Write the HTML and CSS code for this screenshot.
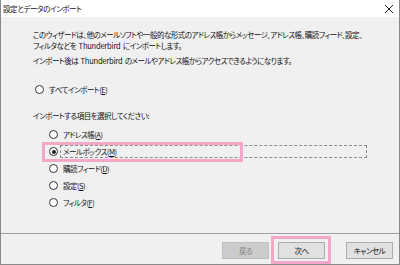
FILE: index.html
```html
<!DOCTYPE html>
<html lang="ja">
<head>
<meta charset="utf-8">
<title>設定とデータのインポート</title>
<link rel="stylesheet" href="styles.css">
</head>
<body>
<div class="window">
  <div class="titlebar">
    <span class="title">設定とデータのインポート</span>
    <svg class="close" width="10" height="10" viewBox="0 0 10 10"><path d="M1 1L9 9M9 1L1 9" stroke="#222" stroke-width="1" fill="none"/></svg>
  </div>
  <div class="content">
    <p class="intro">このウィザードは、他のメールソフトや一般的な形式のアドレス帳からメッセージ、アドレス帳、購読フィード、設定、<br>フィルタなどを <span class="latin">Thunderbird</span> にインポートします。</p>
    <p class="note">インポート後は <span class="latin">Thunderbird</span> のメールやアドレス帳からアクセスできるようになります。</p>
    <div class="radio all"><span class="circle"></span><span class="lbl">すべてインポート(<u>E</u>)</span></div>
    <p class="prompt">インポートする項目を選択してください:</p>
    <div class="group">
      <div class="radio"><span class="circle"></span><span class="lbl">アドレス帳(<u>A</u>)</span></div>
      <div class="radio"><span class="circle checked"></span><span class="lbl focus">メールボックス(<u>M</u>)</span></div>
      <div class="radio"><span class="circle"></span><span class="lbl">購読フィード(<u>D</u>)</span></div>
      <div class="radio"><span class="circle"></span><span class="lbl">設定(<u>S</u>)</span></div>
      <div class="radio"><span class="circle"></span><span class="lbl">フィルタ(<u>F</u>)</span></div>
    </div>
  </div>
  <div class="footer">
    <button class="btn disabled">戻る</button>
    <button class="btn next">次へ</button>
    <button class="btn cancel">キャンセル</button>
  </div>
  <div class="mark mark-mailbox"></div>
  <div class="mark mark-next"></div>
</div>
</body>
</html>
```
FILE: styles.css
```css
* { box-sizing: border-box; }
html, body { margin: 0; padding: 0; }
body {
  width: 400px;
  height: 265px;
  background: #f0f0f0;
  font-family: "Noto Sans CJK JP", "Noto Sans", sans-serif;
  font-size: 7.5px;
  letter-spacing: -0.5px;
  word-spacing: 1.2px;
  font-feature-settings: "palt";
  color: #111;
  overflow: hidden;
}
.latin { letter-spacing: -0.2px; }
.window {
  position: relative;
  width: 400px;
  height: 265px;
  border: 1px solid #8a8a8a;
  border-top: none;
  display: flex;
  flex-direction: column;
  background: #f0f0f0;
}
.titlebar {
  height: 17px;
  background: #fff;
  display: flex;
  align-items: center;
  justify-content: space-between;
  padding: 0 5px 0 2px;
  flex: none;
}
.title { font-size: 7.6px; line-height: 17px; white-space: nowrap; }
.close { display: block; margin-top: 1px; }
.content {
  height: 216px;
  flex: none;
  padding: 12px 0 0 32px;
  line-height: 11px;
}
.content p { margin: 0; white-space: nowrap; }
.note { margin-top: 4px !important; }
.radio {
  display: flex;
  align-items: center;
  height: 11px;
  white-space: nowrap;
}
.radio.all { margin-top: 18px; padding-left: 2px; }
.prompt { margin-top: 15px !important; }
.group { margin-top: 5px; padding-left: 16px; }
.group .radio { height: 17px; }
.circle {
  width: 9px;
  height: 9px;
  border: 1px solid #333;
  border-radius: 50%;
  background: #fff;
  margin-right: 5px;
  flex: none;
  position: relative;
}
.circle.checked::after {
  content: "";
  position: absolute;
  left: 1.5px;
  top: 1.5px;
  width: 4px;
  height: 4px;
  border-radius: 50%;
  background: #222;
}
.lbl u { text-decoration: underline; text-underline-offset: 1px; }
.focus {
  width: 307px;
  height: 13px;
  border: 1px dashed #8c8c8c;
  margin-left: -3px;
  padding-left: 2px;
  line-height: 11px;
}
.footer {
  flex: 1;
  border-top: 1px solid #a0a0a0;
  display: flex;
  justify-content: flex-end;
  align-items: flex-start;
  padding: 8px 6px 0 0;
}
.btn {
  width: 47px;
  height: 17px;
  font-family: inherit;
  font-size: 7.5px;
  letter-spacing: -0.5px;
  font-feature-settings: "palt";
  background: #e1e1e1;
  border: 1px solid #adadad;
  color: #111;
  padding: 0;
  margin: 0;
  line-height: 15px;
}
.btn.disabled { background: #cccccc; border-color: #bfbfbf; color: #838383; }
.btn.next { margin-left: 9px; }
.btn.cancel { margin-left: 21px; }
.mark {
  position: absolute;
  border: 3px solid #f4a8c8;
  pointer-events: none;
}
.mark-mailbox { left: 41px; top: 142px; width: 201px; height: 20px; }
.mark-next { left: 270px; top: 236px; width: 60px; height: 28px; }
```
